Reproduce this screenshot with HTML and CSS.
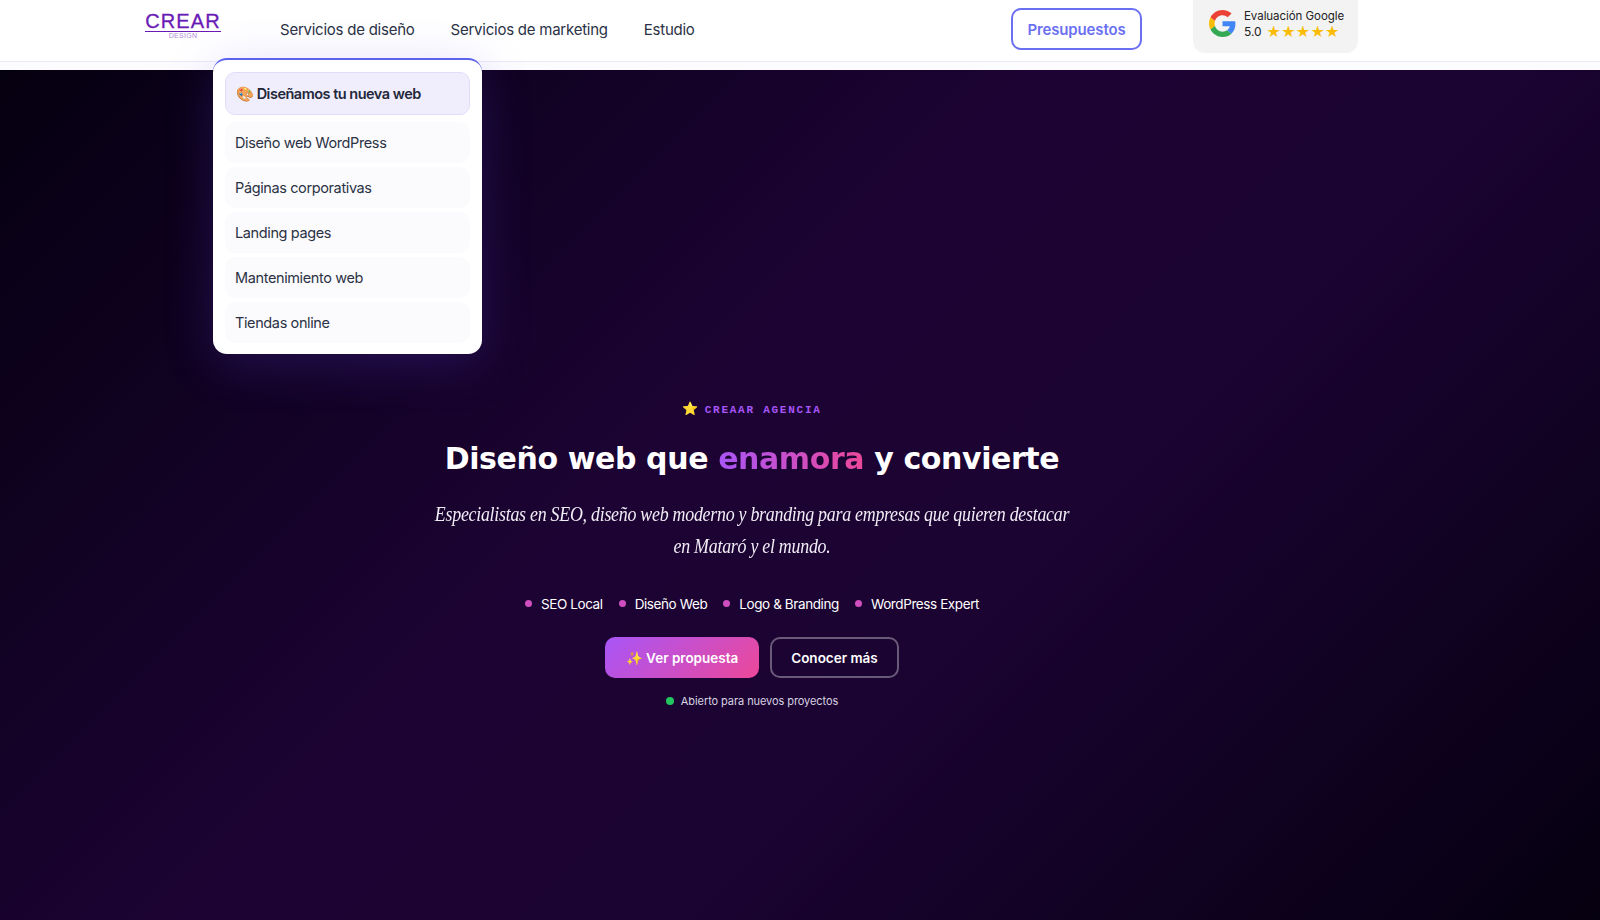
FILE: index.html
```html
<!DOCTYPE html>
<html lang="es">
<head>
    <meta charset="UTF-8">
    <meta name="viewport" content="width=device-width, initial-scale=1.0">
    <title>Creaar Design - Diseño web</title>
    <link rel="stylesheet" href="styles.css">
</head>
<body>
    <header class="site-header">
        <a class="logo" href="#">
            <span class="logo-name">CREAR</span>
            <span class="logo-sub">DESIGN</span>
        </a>

        <nav class="main-nav">
            <div class="nav-item">
                <a href="#">Servicios de diseño</a>
                <!-- dropdown open -->
                <div class="dropdown">
                    <a class="dropdown-link active" href="#">🎨 Diseñamos tu nueva web</a>
                    <a class="dropdown-link" href="#">Diseño web WordPress</a>
                    <a class="dropdown-link" href="#">Páginas corporativas</a>
                    <a class="dropdown-link" href="#">Landing pages</a>
                    <a class="dropdown-link" href="#">Mantenimiento web</a>
                    <a class="dropdown-link" href="#">Tiendas online</a>
                </div>
            </div>
            <div class="nav-item"><a href="#">Servicios de marketing</a></div>
            <div class="nav-item"><a href="#">Estudio</a></div>
        </nav>

        <a class="quote-btn" href="#">Presupuestos</a>

        <div class="google-card">
            <svg class="google-icon" viewBox="0 0 48 48" width="27" height="27">
                <path fill="#EA4335" d="M24 9.5c3.5 0 6.700 1.200 9.200 3.600l6.900-6.900C35.900 2.400 30.500 0 24 0 14.600 0 6.500 5.400 2.600 13.200l8 6.200C12.500 13.700 17.800 9.500 24 9.500z"/>
                <path fill="#4285F4" d="M47 24.500c0-1.600-.1-3.100-.4-4.500H24v9h12.900c-.6 3-2.300 5.500-4.800 7.200l7.700 6C44.300 38 47 31.800 47 24.500z"/>
                <path fill="#FBBC05" d="M10.600 28.600c-.5-1.400-.8-3-.8-4.600s.3-3.200.8-4.600l-8-6.200C1 16.400 0 20.100 0 24s1 7.600 2.600 10.800l8-6.200z"/>
                <path fill="#34A853" d="M24 48c6.500 0 11.900-2.100 15.800-5.800l-7.700-6c-2.100 1.500-4.900 2.300-8.100 2.300-6.200 0-11.500-4.200-13.400-9.900l-8 6.200C6.500 42.600 14.600 48 24 48z"/>
            </svg>
            <div class="google-text">
                <span class="google-label">Evaluación Google</span>
                <span class="google-score">5.0 <span class="stars">★★★★★</span></span>
            </div>
        </div>
    </header>

    <main class="hero">
        <p class="eyebrow"><span class="eyebrow-star">⭐</span> CREAAR AGENCIA</p>
        <h1>Diseño web que <span class="gradient-text">enamora</span> y convierte</h1>
        <p class="lead">Especialistas en SEO, diseño web moderno y branding para empresas que quieren destacar en Mataró y el mundo.</p>

        <ul class="tags">
            <li>SEO Local</li>
            <li>Diseño Web</li>
            <li>Logo &amp; Branding</li>
            <li>WordPress Expert</li>
        </ul>

        <div class="hero-buttons">
            <a class="btn btn-primary" href="#">✨ Ver propuesta</a>
            <a class="btn btn-outline" href="#">Conocer más</a>
        </div>

        <p class="status"><span class="status-dot"></span>Abierto para nuevos proyectos</p>
    </main>
</body>
</html>
```

FILE: styles.css
```css
* {
    box-sizing: border-box;
}

body {
    margin: 0;
    height: 920px;
    overflow: hidden;
    font-family: 'Inter', 'Noto Sans', sans-serif;
    background: #fff;
}

a {
    text-decoration: none;
    color: inherit;
}

.site-header {
    height: 70px;
    display: flex;
    align-items: flex-start;
    padding-left: 145px;
    background: linear-gradient(#fff 61px, #ebebfa 61px, #ebebfa 62px, #fcfcfe 62px);
}

.logo {
    width: 76px;
    margin-top: 12px;
    display: flex;
    flex-direction: column;
    align-items: center;
    color: #6a1bb5;
}

.logo-name {
    width: 100%;
    font-family: 'Liberation Sans', sans-serif;
    font-size: 20px;
    line-height: 19px;
    letter-spacing: 1.1px;
    text-align: center;
    -webkit-text-stroke: 0.3px #6a1bb5;
    border-bottom: 1px solid #6a1bb5;
}

.logo-sub {
    font-family: 'Liberation Sans', sans-serif;
    font-size: 7px;
    line-height: 7px;
    letter-spacing: 0.3px;
    color: #b08bd8;
}

.main-nav {
    display: flex;
    gap: 36px;
    margin-left: 59px;
    margin-top: 20px;
    font-size: 15px;
    line-height: 20px;
    letter-spacing: -0.24px;
    color: #2b3244;
}

.nav-item {
    position: relative;
}

.dropdown {
    position: absolute;
    top: 38px;
    left: -67px;
    width: 269px;
    height: 296px;
    padding: 12px 12px 0;
    display: flex;
    flex-direction: column;
    gap: 4px;
    background: #fff;
    border-top: 2px solid #5b63ee;
    border-radius: 14px;
    box-shadow: 0 10px 50px rgba(99, 72, 240, 0.22);
    font-size: 14.5px;
    letter-spacing: -0.38px;
    z-index: 5;
}

.dropdown-link {
    height: 41px;
    padding-left: 10px;
    display: flex;
    align-items: center;
    background: #fbfbfe;
    border-radius: 10px;
    color: #2b3244;
}

.dropdown-link.active {
    height: 43px;
    margin-bottom: 3px;
    background: #f0eefd;
    border: 1px solid #e0ddfa;
    font-weight: 600;
    letter-spacing: -0.5px;
    color: #23283a;
}

.quote-btn {
    margin-left: auto;
    margin-top: 8px;
    width: 131px;
    height: 42px;
    display: flex;
    align-items: center;
    justify-content: center;
    border: 2px solid #6b70f2;
    border-radius: 10px;
    font-size: 15px;
    font-weight: 600;
    letter-spacing: -0.15px;
    color: #6b70f2;
}

.google-card {
    width: 165px;
    height: 53px;
    margin-left: 51px;
    margin-right: 242px;
    padding: 10px 0 0 16px;
    display: flex;
    gap: 8px;
    background: #f3f3f4;
    border-radius: 0 0 12px 12px;
}

.google-text {
    margin-top: -2px;
    display: flex;
    flex-direction: column;
    font-size: 11.5px;
    line-height: 16px;
    letter-spacing: -0.05px;
    color: #222;
}

.google-score {
    display: flex;
    align-items: center;
    gap: 5px;
    font-size: 12px;
}

.stars {
    color: #fbbc05;
    font-family: 'DejaVu Sans', sans-serif;
    font-size: 16px;
    line-height: 16px;
    letter-spacing: 0.3px;
}

.hero {
    height: 850px;
    padding-top: 330px;
    padding-right: 96px;
    display: flex;
    flex-direction: column;
    align-items: center;
    background: linear-gradient(135deg, #050010 0%, #1c0333 42%, #1b0332 62%, #050010 100%);
    color: #fff;
}

.eyebrow {
    margin: 0;
    font-family: 'Liberation Mono', monospace;
    font-size: 11px;
    line-height: 20px;
    font-weight: 700;
    letter-spacing: 1.75px;
    color: #a855f7;
}

.eyebrow-star {
    font-size: 13px;
    letter-spacing: 0;
    margin-right: -2px;
}

h1 {
    margin: 17px 0 0;
    font-family: 'DejaVu Sans', sans-serif;
    font-size: 30px;
    line-height: 44px;
    font-weight: 700;
    letter-spacing: -0.4px;
}

.gradient-text {
    background: linear-gradient(90deg, #a855f7, #ec4899);
    -webkit-background-clip: text;
    background-clip: text;
    color: transparent;
}

/* the serif is wider than the one in the design, so squeeze it */
.lead {
    width: 720px;
    margin: 18px 0 0;
    font-family: 'Liberation Serif', serif;
    font-style: italic;
    font-size: 20px;
    line-height: 31.5px;
    letter-spacing: -0.3px;
    text-align: center;
    color: #f1edf6;
    transform: scaleX(0.895);
}

.tags {
    list-style: none;
    margin: 32px 0 0;
    padding: 0;
    display: flex;
    gap: 16px;
    font-size: 13.5px;
    line-height: 20px;
    letter-spacing: -0.4px;
}

.tags li {
    display: flex;
    align-items: center;
    gap: 9px;
}

.tags li::before {
    content: "";
    width: 7px;
    height: 7px;
    margin-bottom: 2px;
    border-radius: 50%;
    background: #d04fc0;
}

.hero-buttons {
    display: flex;
    gap: 11px;
    margin-top: 23px;
}

.btn {
    height: 41px;
    display: flex;
    align-items: center;
    justify-content: center;
    border-radius: 10px;
    font-size: 13.5px;
    font-weight: 600;
}

.btn-primary {
    width: 154px;
    background: linear-gradient(135deg, #a855f7, #ec4899);
}

.btn-outline {
    width: 129px;
    border: 2px solid rgba(255, 255, 255, 0.35);
}

.status {
    margin: 15px 0 0;
    display: flex;
    align-items: center;
    gap: 7px;
    font-size: 11px;
    line-height: 16px;
    letter-spacing: -0.08px;
    color: #d8d3e0;
}

.status-dot {
    width: 8px;
    height: 8px;
    border-radius: 50%;
    background: #22c55e;
}
```
